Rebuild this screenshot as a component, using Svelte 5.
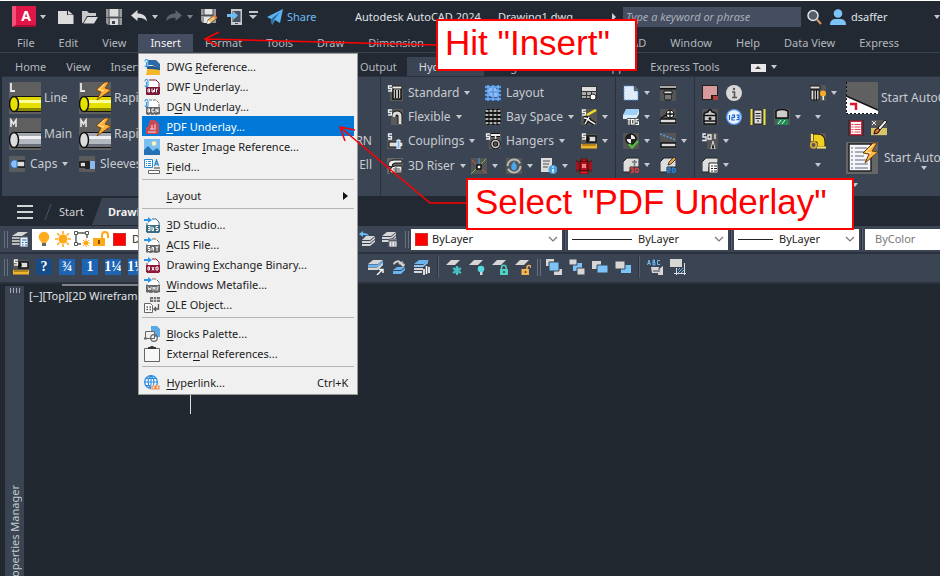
<script>
  const icons = {
    new: '<path d="M0 2h9v4h6.500v9H0z" fill="#dcdcdc"/><path d="M10 1.500l5 4h-5z" fill="#dcdcdc"/>',
    open: '<path d="M0 2h5l2 2h7v3H5L1 14H0z" fill="#c9c9c9"/><path d="M5.500 8H16l-4 6.500H1.500z" fill="#dcdcdc"/>',
    save: '<path d="M0 0h16v16H2l-2-2z" fill="#9a9a9a"/><path d="M3 0h10v7H3z" fill="#dcdcdc"/><path d="M3 0v16M13 0v16M0 8.500h16" stroke="#4a4f57"/><path d="M4 10h8v6H4z" fill="#dcdcdc"/><path d="M6 12h3v3H6z" fill="#39404b"/>',
    undo: '<path d="M0 6.500L6.500 1v3.500c5 0 9 2 9.500 8-2-3-5-4-9.500-3.800V12z" fill="#dcdcdc"/>',
    redo: '<path d="M16 6.500L9.500 1v3.500c-5 0-9 2-9.500 8 2-3 5-4 9.500-3.800V12z" fill="#5b6370"/>',
    saveas: '<path d="M0 0h15v14H2l-2-2z" fill="#9a9a9a"/><path d="M3 0h9v5H3z" fill="#e4e4e4"/><path d="M3 8h7v6H3z" fill="#e4e4e4"/><path d="M0 6.500h14M3 0v6M12 0v6" stroke="#4a4f57"/><path d="M6 15l1-4 6-5 3 3-6 5z" fill="#f4bd62" stroke="#2b313a" stroke-width=".7"/><path d="M6 15l1-4 3 3z" fill="#fff"/><path d="M12 7l3 3 1.500-1.500-3-3z" fill="#e3735d"/>',
    mobile: '<path d="M4 0h11v16H4z" fill="#c9c9c9"/><path d="M5.500 2h8v11h-8z" fill="#4a5260"/><path d="M8 14h3v1H8z" fill="#4a5260"/><path d="M0 5h6V2l5 4.500L6 11V8H0z" fill="#6cbcf5"/>',
    plane: '<path d="M0 8L16 0l-3 14-5-3-3 5-1-6z" fill="#5eb4f2"/><path d="M4 10l9-7-6 8-2 5z" fill="#2c6da0"/>',
    search: '<circle cx="7" cy="6.500" r="5" fill="#555d6b" stroke="#e4e4e4" stroke-width="1.500"/><path d="M11 10.500l4 4.500" stroke="#d49a68" stroke-width="2"/>',
    user: '<circle cx="8" cy="4.500" r="4.300" fill="#7cc3f8"/><path d="M0 16c0-5 3-6 6-6h4c3 0 6 1 6 6z" fill="#7cc3f8"/>',
    stand: '<path d="M3 0h13v16H3z" fill="#5b5b5b"/><path d="M6 4v10h8V4" fill="#ddd" stroke="#111" stroke-width="1.500"/><path d="M5 1h10v3H5z" fill="#eee" stroke="#111"/><path d="M8.500 5v8M11.500 5v8" stroke="#111" stroke-width="1.300"/><path d="M5 1H1.500v2.500h3V6H1" fill="none" stroke="#eee" stroke-width="1.300"/>',
    flex: '<path d="M4 0h12v16H4z" fill="#5b5b5b"/><path d="M7 8V6.500q0-2.500 3-2.500t3 3V15" fill="none" stroke="#111" stroke-width="5"/><path d="M7 8V6.500q0-2.500 3-2.500t3 3V15" fill="none" stroke="#ddd" stroke-width="3"/><path d="M5 1H1.500v2.500h3V6H1" fill="none" stroke="#eee" stroke-width="1.300"/>',
    coupling: '<path d="M0 7h16v9H0z" fill="#5b5b5b"/><path d="M2 9h14v5H2z" fill="#ddd" stroke="#111"/><path d="M10 7h3v9h-3z" fill="#7fb4f0" stroke="#fff"/><path d="M5 1H1.500v2.500h3V6H1" fill="none" stroke="#eee" stroke-width="1.300"/>',
    riser: '<path d="M0 0h16v16H0z" fill="#666"/><path d="M1 8q0-6 6-6h8v3H8q-3 0-3 4zM3 12q1-4 5-4h7v7H3z" fill="#eee" stroke="#111"/><path d="M6 11h7M7 13h7M9 9v5" stroke="#555"/>',
    layout: '<path d="M0 0h16v16H0z" fill="#34558b"/><path d="M0 2h16M0 6h16M0 10h16M0 14h16M3 0v16M8 0v16M13 0v16" stroke="#72b4ff" stroke-width="1.300"/><path d="M4 3h7l2 4-1 5H6l-3-5z" fill="#8cbcf8"/><path d="M8 3v9M4 7h9" stroke="#4a86d8"/>',
    bay: '<path d="M0 0h16v16H0z" fill="#444"/><path d="M0 3h16M0 8h16M0 13h16M3 0v16M8 0v16M13 0v16" stroke="#111" stroke-width="3"/><path d="M2 1v15M6 1v15M10 1v15M14 1v15" stroke="#eee" stroke-width="1.500" stroke-dasharray="2 2"/><path d="M0 2h16M0 6h16M0 10h16M0 14h16" stroke="#aaa" stroke-width=".8"/>',
    hanger: '<path d="M4 0h12v16H4z" fill="#5b5b5b"/><path d="M6 2h9" stroke="#111" stroke-width="4"/><path d="M6 2h9" stroke="#eee" stroke-width="2"/><path d="M10.500 3v4" stroke="#eee" stroke-width="1.500"/><circle cx="10.500" cy="11" r="3.500" fill="none" stroke="#111" stroke-width="3.500"/><circle cx="10.500" cy="11" r="3.500" fill="none" stroke="#ccc" stroke-width="1.500"/><path d="M5 1H1.500v2.500h3V6H1" fill="none" stroke="#eee" stroke-width="1.300"/>',
    sched: '<path d="M0 1h16v13H0z" fill="#333"/><path d="M1 2h14v4H1z" fill="#ddd"/><path d="M1 7h4v3H1zM6 7h4v3H6zM11 7h4v3h-4zM1 11h4v2H1zM6 11h4v2H6z" fill="#aaa"/><circle cx="12" cy="12" r="3" fill="#fff" stroke="#222"/>',
    brace: '<path d="M0 0h16v16H0z" fill="#555"/><path d="M6 6l9-5" stroke="#f0e020" stroke-width="2.500"/><path d="M3 9q4 0 6 3l5 3M8 8l-4 7" stroke="#111" stroke-width="4" fill="none"/><path d="M3 9q4 0 6 3l5 3M8 8l-4 7" stroke="#eee" stroke-width="1.500" fill="none"/><path d="M5 1H1.500v2.500h3V6H1" fill="none" stroke="#eee" stroke-width="1.300"/>',
    ruler: '<path d="M0 1h16v10H0z" fill="#555"/><path d="M6 3h9v6H6z" fill="#ddd" stroke="#111" stroke-width="1.500"/><ellipse cx="7" cy="6" rx="1.800" ry="2.800" fill="#111"/><path d="M0 11h16v4.500H0z" fill="#f0b52a"/><path d="M2 11v2M4 11v2M6 11v2M8 11v2M10 11v2M12 11v2M14 11v2" stroke="#735210"/><path d="M5 1H1.500v2.500h3V6H1" fill="none" stroke="#eee" stroke-width="1.300"/>',
    node: '<path d="M0 0h16v16H0z" fill="#555"/><path d="M8 0v6" stroke="#3fa4ff"/><path d="M0 16l6-6M10 6l5-5" stroke="#66bb44"/><path d="M1 2l5 5M10 10l5 5" stroke="#d05050"/><path d="M6 7h4v4H6z" fill="#fff" stroke="#111" stroke-width="1.500"/>',
    cycle: '<path d="M0 0h16v16H0z" fill="#555"/><circle cx="8" cy="8" r="6.500" fill="none" stroke="#bbb" stroke-width="2" stroke-dasharray="17 3"/><path d="M8 3l3 5-1 4H6L5 8z" fill="#45a8ee"/>',
    docinfo: '<path d="M0 0h11v14H0z" fill="#ddd"/><path d="M2 3h7M2 6h6M2 9h5" stroke="#555"/><circle cx="12" cy="11.500" r="4.500" fill="#4c9fe0"/><path d="M12 11v3.500M12 8.500v1.300" stroke="#fff" stroke-width="1.500"/>',
    hydrant: '<path d="M0 0h16v16H0z" fill="#444"/><path d="M1 5h14v6H1z" fill="#d02030"/><path d="M4 3h8v10H4z" fill="#b31320" stroke="#300"/><path d="M5 1h6v2H5zM4 13h8v3H4zM0 3h2v10H0zM14 3h2v10h-2z" fill="#d62030" stroke="#400" stroke-width=".7"/><path d="M6 6h4v4H6z" fill="#f08080"/>',
    page: '<path d="M1 1h10v5h4v9H1z" fill="#e2ebf8" stroke="#5b9fe8" stroke-dasharray="1.500 1"/><path d="M12 1v4h4z" fill="#666"/>',
    head: '<path d="M0 0h16v16H0z" fill="#555"/><path d="M0 2.500h16" stroke="#111" stroke-width="4"/><path d="M0 2h16" stroke="#ddd" stroke-width="1.500"/><path d="M4 6h8v3H4zM5 9h6v6H5z" fill="#ddd" stroke="#111"/><path d="M7 9v6M9 9v6" stroke="#111"/>',
    tos: '<path d="M3 0h13l-3 6H0z" fill="#9dd0fa"/><path d="M0 6h13l3-6v5l-3 5H0z" fill="#d9ecfb"/><path d="M4 9h12v7H4z" fill="#555"/><path d="M4.500 10.500h3M6 10.500V16M8.500 10.500h2.500V15H8.500zM15.500 10.500H13V13h2.500v2.500H12.500" fill="none" stroke="#fff" stroke-width="1.100"/>',
    target: '<path d="M0 0h16v16H0z" fill="#555"/><path d="M0 10h16v4H0z" fill="#ddd" stroke="#111" stroke-width="1.500"/><circle cx="10" cy="5" r="4" fill="#eee" stroke="#111"/><path d="M10 1v8M6 5h8M1 9l5-3" stroke="#111" stroke-width="1.300" fill="none"/>',
    check: '<path d="M0 0h16v16H0z" fill="#555"/><circle cx="8" cy="6" r="5" fill="#eee" stroke="#111" stroke-width="1.500"/><path d="M8 1v5H3a5 5 0 015-5M8 11V6h5a5 5 0 01-5 5" fill="#222"/><path d="M6 11l3 3.500L15 8" fill="none" stroke="#55b83c" stroke-width="2.500"/>',
    slope: '<path d="M0 0h16v16H0z" fill="#555"/><path d="M0 1l16 6" stroke="#4a9ff0" stroke-dasharray="2 1.500" stroke-width="1.500"/><path d="M1 10h15v4H1z" fill="#ddd" stroke="#111" stroke-width="1.500"/>',
    d3: '<path d="M0 15V5l4-4h12v9H7v5z" fill="#ddd" stroke="#222"/><path d="M9 5h5M11.500 3v6" stroke="#777" stroke-width="1.500"/><path d="M7 11h3v4.500H7M8 13h2M12.500 11v4.500M12.500 11q3 0 3 2.300q0 2.200-3 2.200" stroke="#d84040" stroke-width="1.400" fill="none"/>',
    d2: '<path d="M0 15V5l4-4h12v9H7v5z" fill="#ddd" stroke="#222"/><path d="M8 8l1-3 5-5 2 2-5 5z" fill="#eba444" stroke="#222" stroke-width=".8"/><path d="M7 11h3v2.200H7.500v2.300h3M12.500 11v4.500M12.500 11q3 0 3 2.300q0 2.200-3 2.200" stroke="#2d7fd0" stroke-width="1.400" fill="none"/>',
    area: '<path d="M0 0h16v11h-5v4H0z" fill="#222"/><path d="M1 1h14v9H9v4H1z" fill="#d99a9e"/><path d="M11 11h5v4h-5z" fill="#b04040"/>',
    info: '<circle cx="8" cy="8" r="8" fill="#d8d8d8"/><path d="M6 7h2.500v5M6 12.500h5" stroke="#555" stroke-width="1.600" fill="none"/><circle cx="8" cy="4" r="1.200" fill="#555"/>',
    tank: '<path d="M0 0h16v16H0z" fill="#555"/><path d="M2 5q1-2 4-2l1-2h2l1 2q3 0 4 2v10H2z" fill="#ccc" stroke="#111" stroke-width="1.500"/><path d="M2 6.500h12M2 12h12" stroke="#111" stroke-width="1.500"/><circle cx="8" cy="9.500" r="1.500" fill="#111"/>',
    n123: '<circle cx="8" cy="8" r="8" fill="#5b9dfa"/><circle cx="8" cy="8" r="6.700" fill="#eef5ff"/><path d="M3.500 6v5M6 6.200h2.500v2.200H6V11h3M10.500 6.200H13v4.500h-2.500M11 8.400h2" stroke="#1b61d6" stroke-width="1.200" fill="none"/>',
    list: '<path d="M0 0h16v16H0z" fill="#444"/><path d="M1.500 0v16M14.500 0v16" stroke="#eee24a" stroke-width="2"/><path d="M4 1h8v14H4z" fill="#ddd" stroke="#222"/><path d="M5.500 4.500h5M5.500 7h5M5.500 9.500h5M7 12h2" stroke="#222"/>',
    valve: '<path d="M0 0h16v16H0z" fill="#555"/><path d="M2 2q6-3 12 0v7H2z" fill="#ccc" stroke="#111" stroke-width="1.500"/><path d="M3 10h11v6H3z" fill="#1f8a55"/><path d="M4 15l3-4M8 15l3-4" stroke="#d6fbe4"/>',
    s01: '<path d="M5 0h11v16H5z" fill="#555"/><path d="M4 1H1v3h3v3.500H0M6 2h3v4H6zM13 1v5" fill="none" stroke="#eee" stroke-width="1.300"/><path d="M11 8l2 8H9z" fill="#111" stroke="#ddd"/>',
    table: '<path d="M0 15V5l4-4h12v9H7v5z" fill="#ddd" stroke="#222"/><path d="M7 6h9v10H7z" fill="#fff" stroke="#222"/><path d="M9 9h2M12 9h3M9 11.500h2M12 11.500h3M9 14h2M12 14h3" stroke="#222"/>',
    fast: '<path d="M0 0h16v16H0z" fill="#555"/><path d="M0 1h10v3H0zM1 5h8v10H1z" fill="#ddd" stroke="#111"/><path d="M4 5v10M6.500 5v10" stroke="#111" stroke-width="1.300"/><circle cx="13" cy="8.500" r="3" fill="#f7a928"/><path d="M12.500 11h1.500v4h-1.500z" fill="#eee"/>',
    elbow: '<path d="M0 0h16v16H0z" fill="#555"/><path d="M3 1h4q8 0 8 8v5H7V9H3z" fill="#efcf22" stroke="#111"/><path d="M2 1v7M7 14.500h9" stroke="#f8e468" stroke-width="2"/><circle cx="3.500" cy="12" r="2.800" fill="none" stroke="#d8a93a" stroke-width="1.800"/>',
    redlist: '<path d="M1 0h14v16H1z" fill="#c62b45" stroke="#222"/><path d="M3 2h10v12H3z" fill="#fff"/><path d="M3.500 4.500h9M3.500 7h9M3.500 9.500h9M3.500 12h9" stroke="#e03c50" stroke-dasharray="2 1 6 0"/>',
    brush: '<path d="M0 0h16v16H0z" fill="#555"/><path d="M0 8h16v7H0z" fill="#d8c56a"/><path d="M3 14q0-5 4-6l2 2q-1 4-6 4z" fill="#e06a28" stroke="#111"/><path d="M7 8l7-8 2 2-7 8z" fill="#eee" stroke="#111"/><path d="M1 1l4 4M5 1L1 5" stroke="#eee"/>',
    layers: '<path d="M6 1h10l-6 4H0z" fill="#d6d6d6"/><path d="M0 6h8v2H0zM0 9h8v2H0zM0 12h8v2H0z" fill="#b8b8b8"/><path d="M8 6h8v10H8z" fill="#eaf2fa" stroke="#59616e"/><path d="M10 9h4.500M10 11.500h1.500M10 14h1.500M13 11.500h2M13 14h2" stroke="#1d6ab5"/>',
    bulb: '<circle cx="8" cy="6" r="5.300" fill="#ffad1f"/><path d="M5.500 10h5v2h-5z" fill="#ffad1f"/><path d="M6 12h4v3H6z" fill="#666"/>',
    sun: '<circle cx="8" cy="8" r="4.500" fill="#ffa81a"/><path d="M8 0v3M8 13v3M0 8h3M13 8h3M2.300 2.300l2.200 2.200M11.500 11.500l2.200 2.200M2.300 13.700l2.200-2.200M11.500 4.500l2.200-2.200" stroke="#ffa81a" stroke-width="1.600"/>',
    frame: '<path d="M3 2h9M2 3v9M13 3v4M3 13h4" stroke="#555" stroke-width="1.400"/><path d="M.5.500h3v3h-3zM11.500.500h3v3h-3zM.5 11.500h3v3h-3z" fill="#fff" stroke="#555"/><circle cx="12" cy="12" r="2.300" fill="#ffa81a"/><path d="M12 8v8M8 12h8M9 9l6 6M15 9l-6 6" stroke="#ffa81a" stroke-width=".9"/>',
    unlock: '<path d="M9 8V4a3 3 0 016 0v3" fill="none" stroke="#ffa81a" stroke-width="2"/><path d="M0 7h12v8H0z" fill="#ffa81a"/><path d="M5 9h2v4H5z" fill="#7a4c00"/>',
    lback: '<path d="M7 5h9l-5 4H3zM3 10h8l5-4v2l-5 4H3zM3 13h8l5-4v2l-5 4H3z" fill="#d6d6d6"/><path d="M0 3l4-3v2q5 0 6 3-3-1-6-1v2z" fill="#6cbcf5"/>',
    lset: '<path d="M6 1h9l-5 4H1zM1 6h9l5-4v2l-5 4H1zM1 9h9l5-4v2l-5 4H1z" fill="#d6d6d6"/><path d="M8 8h8v8H8z" fill="#eee" stroke="#59616e"/><path d="M8 9.500h8" stroke="#59616e" stroke-width="2"/><path d="M10 12h1.500M13 12h1.500M10 14h1.500M13 14h1.500" stroke="#59616e"/>',
    lmatch: '<path d="M5 1h10l-5 4H0zM0 8.500h9l6-5v2.500l-5 5H0z" fill="#d6d6d6"/><path d="M0 5.500h9.500l5.500-4v2L9.500 8H0z" fill="#69b5f2"/><path d="M9 16l5-5M11 10.500h4V14" fill="none" stroke="#fff" stroke-width="1.400"/>',
    liso: '<path d="M2 4q5-5 8-1l2-1-1 4-4-1 1.500-1Q6 2 3 6z" fill="#d6d6d6"/><circle cx="12" cy="6" r="1.800" fill="#d6d6d6"/><path d="M6 8h8l-4 3H2zM2 12h8l4-3v2l-4 4H2z" fill="#69b5f2"/>',
    lwalk: '<path d="M5 1h10l-5 4H0z" fill="#69b5f2"/><path d="M0 6h9l5-4v2L9 8H0z" fill="#8cc7f5"/><path d="M0 9h9v2H0zM0 12h8v2H0z" fill="#d6d6d6"/><path d="M10 10v6M12.500 7v8M15 8v6" stroke="#fff" stroke-width="1.600"/>',
    lfreeze: '<path d="M5 1h9L9 6H0z" fill="#d6d6d6"/><path d="M11 7v9M7 9l8 5M15 9l-8 5" stroke="#45c4c8" stroke-width="2"/><circle cx="11" cy="11.500" r="3" fill="none" stroke="#45c4c8"/>',
    loff: '<path d="M5 1h9L9 6H0z" fill="#d6d6d6"/><circle cx="12" cy="10" r="3.300" fill="#55d9e0"/><path d="M11 13h2.500v3H11z" fill="#d6d6d6"/>',
    llock: '<path d="M5 1h9L9 6H0z" fill="#d6d6d6"/><path d="M9.500 10V8.500a2.300 2.300 0 014.600 0V10" fill="none" stroke="#55d0c0" stroke-width="1.500"/><path d="M8 10h8v6H8z" fill="#55d0c0"/><path d="M12 12v2" stroke="#14524c" stroke-width="1.500"/>',
    lunlock: '<path d="M5 1h9L9 6H0z" fill="#d6d6d6"/><path d="M12 10V8.500a2 2 0 014 0V9" fill="none" stroke="#f5b556" stroke-width="1.500"/><path d="M6.500 10H14v6H6.500z" fill="#f5b556"/><path d="M10.500 12v2" stroke="#6b4205" stroke-width="1.500"/>',
    ofront: '<path d="M0 0h8v7H0zM8 10h8v6H8z" fill="#d6d6d6"/><path d="M3 3h10v9H3z" fill="#7cc3f8" stroke="#3b4453"/>',
    oback: '<path d="M4 4h9v8H4z" fill="#7cc3f8"/><path d="M0 0h8v6H0zM8 9h8v7H8z" fill="#d6d6d6" stroke="#3b4453"/>',
    oabove: '<path d="M0 2h9v8H0z" fill="#d6d6d6"/><path d="M5 6h11v8H5z" fill="#7cc3f8" stroke="#3b4453"/>',
    obelow: '<path d="M6 6h10v8H6z" fill="#7cc3f8"/><path d="M0 2h10v8H0z" fill="#d6d6d6" stroke="#3b4453"/>',
    abc: '<path d="M0.500 6L2 1l1.500 5M1 4.500h2M6 1v5h2V3.500H6M6 1h1.500v2.500M13 1.500h-2.500v4H13" fill="none" stroke="#6cbcf5"/><path d="M4 8h8v2l4-3v9h-5v-2H5z" fill="#d6d6d6"/><path d="M12 9v4M6 12h5" stroke="#3b4453"/>',
    hatch: '<path d="M0 0h12v8H0z" fill="#d6d6d6"/><path d="M4 14.500h12M14.500 4v12M6.500 9v7" stroke="#ddd" fill="none"/><path d="M7 9h7v5H7z" fill="#3b4453"/><path d="M8 14l5-5M8 11l2-2M11 14l3-3" stroke="#6cbcf5"/>',
    dwg: '<path d="M4 1h8l4 4v5L8 6H4z" fill="#2c6aa8"/><path d="M4 7l12 2v7H2z" fill="#f4b62b"/><path d="M3 7l6 0 7 2v2L8 10H3z" fill="#24588e"/><path d="M1 2.500q0-2 1.500-2t1.500 2v4q0 1.500-1.500 1.500T1 6.500M2.500 3v5" fill="none" stroke="#3a9ae0" stroke-width="1.100"/>',
    dwf: '<path d="M5 1h7l3 3v11.500H2.500V8" fill="#fff" stroke="#7b1734"/><path d="M2 8h14v7H2z" fill="#7b1734"/><path d="M4 10v3h1.500v-3zM8 9.500V13h1.500V11M10.500 13V9.500M14 10h-1.500v3.500" fill="none" stroke="#fff"/><path d="M1 2.500q0-2 1.500-2t1.500 2v4q0 1.500-1.500 1.500T1 6.500M2.500 3v5" fill="none" stroke="#3a9ae0" stroke-width="1.100"/>',
    dgn: '<path d="M5 1h7l3 3v11.500H2.500V8" fill="#fff" stroke="#777" stroke-dasharray="3 1"/><path d="M2 8h14v7H2z" fill="#666"/><path d="M4 10v3h1.500v-3zM10 10H8v3h2v-1M12 13.500V10l2 3V9.500" fill="none" stroke="#fff"/><path d="M1 2.500q0-2 1.500-2t1.500 2v4q0 1.500-1.500 1.500T1 6.500M2.500 3v5" fill="none" stroke="#3a9ae0" stroke-width="1.100"/>',
    pdf: '<path d="M6 1h5l4 4v9H4V7z" fill="#c94a55"/><path d="M2 8h12v7H2z" fill="#c94a55"/><path d="M4 13h8M6 10h4M8 6v4M11 5v6" stroke="#f3dde0"/>',
    raster: '<path d="M0 0h16v16H0z" fill="#7cc0f2"/><path d="M0 11l4-4 5 5 4-3 3 3v4H0z" fill="#2472b4"/><circle cx="10" cy="4.500" r="2.300" fill="#fff2b8"/>',
    field: '<path d="M.5.500h8v8h-8z" fill="#fff" stroke="#2d8ad0"/><path d="M2 2.500h1M4 2.500h3M2 4.500h1M4 4.500h3M2 6.500h1M4 6.500h3" stroke="#2d8ad0"/><path d="M10.500 7l2-6 2 6M11 5h3.500" fill="none" stroke="#2d8ad0" stroke-width="1.300"/><path d="M4.500 11.500h11v3h-11z" fill="#fff" stroke="#666"/><path d="M10 9h6" stroke="#666" stroke-width="1.300"/>',
    imp3d: '<path d="M8 2h4l3 3v10.500H3V6" fill="#fff" stroke="#3d6c85"/><path d="M2 8h14v7H2z" fill="#3d6c85"/><path d="M4 9.500h2v4H4M4 11.500h2M8 9.500v4h1.500v-3M14 9.500h-2v2h2v2h-2" fill="none" stroke="#fff"/><path d="M0 2h4V0l4 3-4 3V4H0z" fill="#2d94e8"/>',
    impg: '<path d="M8 2h4l3 3v10.500H3V6" fill="#fff" stroke="#777" stroke-dasharray="4 1"/><path d="M2 8h14v7H2z" fill="#666"/><path d="M6 9.500H4v2h2v2H4M8 13.500v-3h1.500v3M11.500 10h3M13 10v4" fill="none" stroke="#fff"/><path d="M0 2h4V0l4 3-4 3V4H0z" fill="#2d94e8"/>',
    wmf: '<path d="M8 2h4l3 3v10.500H3V6" fill="#fff" stroke="#777" stroke-dasharray="4 1"/><path d="M2 8h14v7H2z" fill="#666"/><path d="M4 9.500l.7 3.500 1-2 1 2 .6-3.500M9 13.500V10l1 2 1-2v3.500M13 14v-4h2M13 12h1.500" fill="none" stroke="#fff" stroke-width=".8"/><path d="M0 2h4V0l4 3-4 3V4H0z" fill="#2d94e8"/>',
    impr: '<path d="M8 2h4l3 3v10.500H3V6" fill="#fff" stroke="#8e1838"/><path d="M2 8h14v7H2z" fill="#8e1838"/><path d="M4 10v3h1.500v-3zM8 10l2 3.500M10 10l-2 3.500M12 10h2v3h-2z" fill="none" stroke="#fff"/><path d="M0 2h4V0l4 3-4 3V4H0z" fill="#2d94e8"/>',
    ole: '<path d="M6 0h10v5H6z" fill="#777"/><path d="M7 2.500h9M9.500 0v5M12.500 0v5" stroke="#eee" stroke-width=".7"/><path d="M.5 6.500h6l2 2v7h-8z" fill="#fff" stroke="#666"/><path d="M2.500 10h1.500M2.500 12.500h1.500M5.500 10H7M5.500 12.500H7" stroke="#555" stroke-width="1.300"/><path d="M14.500 7v5H10M12 10l-2 2 2 2" fill="none" stroke="#555" stroke-width="1.300"/>',
    blocks: '<path d="M7 0h6l3 3v8H7z" fill="#5aa8e4"/><path d="M1.500 5.500h9v7h-9z" fill="#eee" stroke="#666"/><path d="M0 12.500h3" stroke="#666" stroke-width="2"/><circle cx="10" cy="12" r="3.300" fill="none" stroke="#666" stroke-width="1.200"/>',
    xref: '<path d="M.5 2.500h15v13H.5z" fill="#f8f8f8" stroke="#666"/><path d="M4 1h2l1-1h2l1 1h2v2H4z" fill="#333"/>',
    globe: '<circle cx="7" cy="7" r="6.300" fill="#fff" stroke="#2a8be0" stroke-width="1.300"/><path d="M0 7h14M1.500 3.500h11M1.500 10.500h11M7 0v14M7 0q-6 7 0 14M7 0q6 7 0 14" fill="none" stroke="#2a8be0" stroke-width="1.100"/><path d="M7 10h9v5H7z" fill="#f0f0f0"/><path d="M8 11h3v3H8zM12 11h3v3h-3z" fill="none" stroke="#ee8340" stroke-width="1.200"/>',
    caps: '<path d="M0 0h16v16H0z" fill="#5b5b5b"/><path d="M6 5h10v6H6z" fill="#ddd" stroke="#111" stroke-width="1.500"/><path d="M4 4h4v8H4q-5-4 0-8z" fill="#8cc0ff" stroke="#2e6cb8"/>',
    sleeve: '<path d="M0 0h16v16H0z" fill="#5b5b5b"/><path d="M1 6h9v5H1z" fill="#ddd" stroke="#111" stroke-width="1.500"/><path d="M9 5h7v8H9z" fill="#8db8ef"/><path d="M6 5h5v8H6z" fill="#222"/>'
  };

  const big = {
    pipeL: '<path d="M0 0h32v32H0z" fill="#5f5f5f"/><path d="M2 1v8h4" fill="none" stroke="#e8e8e8" stroke-width="1.800"/><path d="M5 14h27v16H5z" fill="#111"/><path d="M7 15h25v4H7z" fill="#dcd800"/><path d="M7 18h25v4H7z" fill="#ffff9a"/><path d="M7 21h25v5H7z" fill="#e6e000"/><path d="M7 26h25v3H7z" fill="#8d8a00"/><ellipse cx="5" cy="22" rx="4.500" ry="7.500" fill="#e8e200" stroke="#111" stroke-width="1.500"/>',
    pipeM: '<path d="M0 0h32v32H0z" fill="#5f5f5f"/><path d="M2 9V2l2.500 4L7 2v7" fill="none" stroke="#e8e8e8" stroke-width="1.600"/><path d="M5 14h27v16H5z" fill="#111"/><path d="M7 15h25v4H7z" fill="#a3a7b0"/><path d="M7 18h25v4H7z" fill="#f0f0f4"/><path d="M7 21h25v5H7z" fill="#b4b8c0"/><path d="M7 26h25v3H7z" fill="#6d7078"/><ellipse cx="5" cy="22" rx="4.500" ry="7.500" fill="#ddd" stroke="#111" stroke-width="1.500"/>',
    bolt: '<path d="M26 0L17 8l5 2-4 8 14-10-6-2 4-6z" fill="#ffb03a" stroke="#6d3d00" stroke-width=".8"/><path d="M25 2l-5 5.500 5 1.500" fill="none" stroke="#fff0b0"/>',
    cad: '<path d="M0 0h32v32H0z" fill="#606060"/><path d="M0 14l32 14v4H0z" fill="#fff"/><path d="M0 14l32 14" stroke="#111" stroke-width="1.500"/><path d="M.5 0v32M0 31.500h32" stroke="#111" stroke-dasharray="2 2"/><path d="M4 22h6v6" fill="none" stroke="#e0182c" stroke-width="2.500"/>',
    lisp: '<path d="M0 0h32v32H0z" fill="#666"/><path d="M3 2h22v27H3z" fill="#f3f6fa" stroke="#222" stroke-width="1.500"/><path d="M5 6h2M5 10h2M5 14h2M5 18h2M5 22h2M5 26h2M9 6h12M9 10h10M9 14h9M9 18h13M9 22h13M9 26h13" stroke="#667" stroke-width="1.200"/><path d="M27 1L17 11l6 1-4 9 13-11-6-1 5-8z" fill="#ffb84a" stroke="#6d3d00"/><path d="M27 3l-7 7 5 1" fill="none" stroke="#fff0b0"/>'
  };

  const menuGroups = [
    [
      ['dwg', 'DWG ', 'R', 'eference...'],
      ['dwf', 'DWF ', 'U', 'nderlay...'],
      ['dgn', 'D', 'G', 'N Underlay...'],
      ['pdf', '', 'P', 'DF Underlay...'],
      ['raster', 'Raster ', 'I', 'mage Reference...'],
      ['field', '', 'F', 'ield...']
    ],
    [['', '', 'L', 'ayout', 'sub']],
    [
      ['imp3d', '', '3', 'D Studio...'],
      ['impg', '', 'A', 'CIS File...'],
      ['impr', 'Drawing ', 'E', 'xchange Binary...'],
      ['wmf', '', 'W', 'indows Metafile...'],
      ['ole', '', 'O', 'LE Object...']
    ],
    [
      ['blocks', '', 'B', 'locks Palette...'],
      ['xref', 'Exter', 'n', 'al References...']
    ],
    [['globe', '', 'H', 'yperlink...', 'Ctrl+K']]
  ];

  const menus = ['File', 'Edit', 'View', 'Insert', 'Format', 'Tools', 'Draw', 'Dimension', 'Modify', 'Parametrics', 'HydraCAD', 'Window', 'Help', 'Data View', 'Express'];
  const tabs = ['Home', 'View', 'Insert', 'Annotate', 'Parametric', 'Layout', 'Output', 'HydraCAD', 'Plug-ins', 'Featured Apps', 'Express Tools'];
  const sizes = ['?', '¾', '1', '1¼', '1½', '2'];
</script>

{#snippet icon(name)}
  <svg class="ic" viewBox="0 0 16 16" aria-hidden="true">{@html icons[name]}</svg>
{/snippet}

{#snippet large(name, bolt)}
  <svg class="lg" viewBox="0 0 32 32" aria-hidden="true">{@html big[name] + (bolt ? big.bolt : '')}</svg>
{/snippet}

{#snippet tool(name, label, arrow)}
  <button class="tool" aria-label={label || name}>
    {#if name}{@render icon(name)}{/if}
    {#if label}<span>{label}</span>{/if}
    {#if arrow}<i class="caret"></i>{/if}
  </button>
{/snippet}

{#snippet chevron()}
  <svg class="chev" viewBox="0 0 10 6" aria-hidden="true"><path d="M1 1l4 4 4-4" fill="none" stroke="#777" stroke-width="1.200" /></svg>
{/snippet}

<div class="app">
  <header class="title">
    <button class="logo" aria-label="Application menu">A</button>
    <i class="caret"></i>
    <div class="quick">
      <button aria-label="New">{@render icon('new')}</button>
      <button aria-label="Open">{@render icon('open')}</button>
      <button aria-label="Save">{@render icon('save')}</button>
    </div>
    <button class="step" aria-label="Undo">{@render icon('undo')}<i class="caret"></i></button>
    <button class="step" aria-label="Redo">{@render icon('redo')}<i class="caret dim"></i></button>
    <button class="after" aria-label="Save as">{@render icon('saveas')}</button>
    <button class="after" aria-label="Open from mobile">{@render icon('mobile')}</button>
    <i class="caret lined"></i>
    <button class="share">{@render icon('plane')}<span>Share</span></button>
    <div class="doc"><span>Autodesk AutoCAD 2024</span><span>Drawing1.dwg</span></div>
    <i class="play"></i>
    <input class="find" type="text" placeholder="Type a keyword or phrase" aria-label="Search" />
    <button aria-label="Search">{@render icon('search')}</button>
    <button class="user">{@render icon('user')}<span>dsaffer</span></button>
    <i class="caret"></i>
  </header>

  <nav class="menubar">
    {#each menus as m}
      <div class="entry" class:active={m === 'Insert'}>
        <button>{m}</button>
        {#if m === 'Insert'}
          <div class="menu" role="menu">
            {#each menuGroups as group, g}
              {#if g}<hr />{/if}
              {#each group as [ic, pre, key, post, extra]}
                <button role="menuitem" class:hot={ic === 'pdf'}>
                  <span class="gutter">{#if ic}{@render icon(ic)}{/if}</span>
                  <span class="name">{pre}<u>{key}</u>{post}</span>
                  {#if extra === 'sub'}<i class="sub"></i>{:else if extra}<span>{extra}</span>{/if}
                </button>
              {/each}
            {/each}
          </div>
        {/if}
      </div>
    {/each}
  </nav>

  <nav class="tabs">
    {#each tabs as t}
      <button class:active={t === 'HydraCAD'}>{t}</button>
    {/each}
    <button class="collapse" aria-label="Minimize ribbon"><i class="up"></i></button>
    <i class="caret"></i>
  </nav>

  <section class="ribbon">
    <div class="panel pipes">
      <div class="grid">
        <button class="tool">{@render large('pipeL')}<span>Line</span></button>
        <button class="tool">{@render large('pipeL', true)}<span>Rapid Line</span></button>
        <button class="tool">{@render large('pipeM')}<span>Main</span></button>
        <button class="tool">{@render large('pipeM', true)}<span>Rapid Main</span></button>
        {@render tool('caps', 'Caps', true)}
        {@render tool('sleeve', 'Sleeves', false)}
      </div>
      <div class="ends"><span>RN</span><span>Ell</span></div>
    </div>

    <div class="panel fittings">
      <div class="row">{@render tool('stand', 'Standard', true)}{@render tool('layout', 'Layout')}{@render tool('sched')}</div>
      <div class="row">{@render tool('flex', 'Flexible', true)}{@render tool('bay', 'Bay Space', true)}{@render tool('brace', '', true)}</div>
      <div class="row">{@render tool('coupling', 'Couplings', true)}{@render tool('hanger', 'Hangers', true)}{@render tool('ruler', '', true)}</div>
      <div class="row last">{@render tool('riser', '3D Riser', true)}{@render tool('node', '', true)}{@render tool('cycle', '', true)}{@render tool('docinfo', '', true)}{@render tool('hydrant')}</div>
    </div>

    <div class="panel pair">
      <div class="row">{@render tool('page', '', true)}{@render tool('head')}</div>
      <div class="row">{@render tool('tos', '', true)}{@render tool('target')}</div>
      <div class="row">{@render tool('check', '', true)}{@render tool('slope', '', true)}</div>
      <div class="row">{@render tool('d3', '', true)}{@render tool('d2')}</div>
    </div>

    <div class="panel tools">
      <div class="set">
        <div class="row">{@render tool('area')}{@render tool('info')}</div>
        <div class="row">{@render tool('tank')}{@render tool('n123')}{@render tool('list')}{@render tool('valve', '', true)}</div>
        <div class="row">{@render tool('s01', '', true)}</div>
        <div class="row">{@render tool('table', '', true)}</div>
      </div>
      <div class="set narrow">
        <div class="row">{@render tool('fast', '', true)}</div>
        <div class="row mid"><i class="caret"></i></div>
        <div class="row">{@render tool('elbow')}</div>
        <div class="row mid"><i class="caret"></i></div>
      </div>
      <div class="start">
        <button class="tool">{@render large('cad')}<span>Start AutoCAD</span></button>
        <div class="minis">{@render tool('redlist')}{@render tool('brush')}</div>
        <button class="tool wide">{@render large('lisp')}<span class="stack"><span>Start AutoLISP</span><i class="caret"></i></span></button>
        <i class="caret more"></i>
      </div>
    </div>
  </section>

  <nav class="files">
    <button class="burger" aria-label="Drawings menu"><i></i><i></i><i></i></button>
    <svg class="slash" viewBox="0 0 8 16" aria-hidden="true"><path d="M1 16L7 0" stroke="#4b5464" /></svg>
    <button class="plain">Start</button>
    <button class="current">Drawing1*</button>
  </nav>

  <section class="bar">
    <i class="grip"></i>
    <button aria-label="Layer properties">{@render icon('layers')}</button>
    <div class="combo layer">
      {@render icon('bulb')}{@render icon('sun')}{@render icon('frame')}{@render icon('unlock')}
      <i class="swatch"></i>
      <select aria-label="Layer"><option>Defpoints</option></select>
      {@render chevron()}
    </div>
    <div class="duo">
      <button aria-label="Layer previous">{@render icon('lback')}</button>
      <button aria-label="Layer states">{@render icon('lset')}</button>
    </div>
    <i class="grip"></i>
    <div class="combo colour"><i class="swatch"></i><select aria-label="Colour"><option>ByLayer</option></select>{@render chevron()}</div>
    <i class="rule"></i>
    <div class="combo ltype"><i class="stroke"></i><select aria-label="Linetype"><option>ByLayer</option></select>{@render chevron()}</div>
    <i class="rule"></i>
    <div class="combo weight"><i class="stroke short"></i><select aria-label="Lineweight"><option>ByLayer</option></select>{@render chevron()}</div>
    <i class="rule"></i>
    <div class="combo plot"><select aria-label="Plot style" disabled><option>ByColor</option></select></div>
  </section>

  <section class="bar second">
    <div class="strip sizes">
      <i class="grip"></i>
      <button aria-label="Pipe size">{@render icon('ruler')}</button>
      {#each sizes as s, n}<button class="size" class:query={n === 0}>{s}</button>{/each}
    </div>
    <div class="strip">
      <button aria-label="Layer match">{@render icon('lmatch')}</button>
      <button aria-label="Layer isolate">{@render icon('liso')}</button>
      <button aria-label="Layer walk">{@render icon('lwalk')}</button>
      <i class="rule"></i>
      <button aria-label="Freeze layer">{@render icon('lfreeze')}</button>
      <button aria-label="Layer off">{@render icon('loff')}</button>
      <button aria-label="Lock layer">{@render icon('llock')}</button>
      <button aria-label="Unlock layer">{@render icon('lunlock')}</button>
    </div>
    <i class="grip"></i>
    <div class="strip">
      <button aria-label="Bring to front">{@render icon('ofront')}</button>
      <button aria-label="Send to back">{@render icon('oback')}</button>
      <button aria-label="Bring above">{@render icon('oabove')}</button>
      <button aria-label="Send under">{@render icon('obelow')}</button>
      <i class="rule"></i>
      <button aria-label="Text to front">{@render icon('abc')}</button>
      <button aria-label="Hatch to back">{@render icon('hatch')}</button>
    </div>
  </section>

  <main>
    <aside><i class="dots"></i><span>Properties Manager</span></aside>
    <div class="canvas">
      <div class="edge"></div>
      <p>[−][Top][2D Wireframe]</p>
      <i class="cross"></i>
    </div>
  </main>

  <svg class="arrows" width="480" height="220" aria-hidden="true">
    <g fill="none" stroke="#f00" stroke-width="1.500">
      <path d="M437 45L205 39M219 32L205 39L218 46" />
      <path d="M467 203H430L340 127M355 130L340 127L345 141" />
    </g>
  </svg>
  <div class="note one">Hit "Insert"</div>
  <div class="note two">Select "PDF Underlay"</div>
</div>

<style>
  :global(body) { background: #212830; overflow: hidden; }
  .app {
    position: relative;
    display: flex;
    flex-direction: column;
    height: 100vh;
    overflow: hidden;
    box-sizing: border-box;
    border-top: 1px solid #fff;
    background: #222933;
    color: #c8cbd0;
    font: 11px/16px "Noto Sans", "Open Sans", sans-serif;
    white-space: nowrap;
  }
  button, select, input { font: inherit; color: inherit; border: 0; padding: 0; margin: 0; background: none; }
  button { display: flex; align-items: center; flex: none; white-space: nowrap; }
  .ic { width: 16px; height: 16px; flex: none; display: block; }
  .lg { width: 32px; height: 32px; flex: none; display: block; }
  .caret { flex: none; width: 0; height: 0; border: 3px solid transparent; border-top: 4px solid #c4c7cc; border-bottom: 0; }
  .caret.dim { border-top-color: #7b828d; }

  .title { display: flex; align-items: center; flex: none; height: 33px; padding: 0 0 2px 12px; box-sizing: border-box; }
  .logo { width: 24px; height: 21px; justify-content: center; box-sizing: border-box; border-left: 4px solid #f0507a; border-bottom: 2px solid #a80e36; background: #e01648; color: #fff; font-weight: 700; font-size: 14px; margin-right: 4px; }
  .quick { display: flex; gap: 8px; margin: 0 9px 0 12px; }
  .step { gap: 5px; margin-right: 8px; }
  .after { margin-right: 10px; }
  .lined { position: relative; margin: 0 10px 0 -4px; border-width: 4px 4px 0; }
  .lined::before { content: ""; position: absolute; left: -4px; top: -8px; width: 9px; height: 2px; background: #c4c7cc; }
  .share { gap: 4px; color: #6cbcf5; width: 88px; }
  .doc { display: flex; color: #e0e2e5; flex: 0 0 256px; }
  .doc span:first-child { width: 143px; }
  .play { flex: none; width: 0; height: 0; margin: 0 7px 0 1px; border: 4px solid transparent; border-left-color: #d0d0d0; border-right: 0; }
  .find { flex: 0 1 178px; min-width: 60px; height: 20px; box-sizing: border-box; padding: 0 3px; margin-right: 5px; background: #454d60; color: #a9aeb8; font-style: italic; }
  .find::placeholder { color: #a9aeb8; opacity: 1; }
  .user { gap: 5px; margin: 0 auto 0 8px; color: #e0e2e5; }

  .menubar { display: flex; flex: none; height: 19px; padding: 0 5px; box-sizing: border-box; border-bottom: 1px solid #3b4453; }
  .entry { position: relative; display: flex; }
  .entry > button { padding: 0 12px; height: 18px; color: #b4b8be; }
  .entry.active { background: #454d60; }
  .entry.active > button { color: #f2f2f2; }
  .menu { position: absolute; z-index: 5; left: 0; top: 19px; width: 220px; padding: 2px 3px; box-sizing: border-box; background: #f0f0f0; border: 1px solid #9a9a9a; color: #1c1c1c; }
  .menu button { width: 100%; height: 20px; padding: 1px 6px 0 2px; }
  .menu .hot { background: #0078d7; color: #fff; }
  .menu hr { height: 1px; margin: 3px 0 5px; border: 0; background: #b4b4b4; }
  .gutter { width: 22px; }
  .name { flex: 1; text-align: left; }
  .sub { border: 4px solid transparent; border-left: 5px solid #111; border-right: 0; }
  u { text-underline-offset: 2px; }

  .tabs { display: flex; align-items: center; flex: none; height: 23px; padding: 4px 0 0 5px; box-sizing: border-box; }
  .tabs button { height: 19px; padding: 0 10px; color: #b4b8be; }
  .tabs .active { padding: 0 12px; background: #3b4453; color: #d8dbe0; }
  .tabs .collapse { width: 15px; height: 8px; padding: 0; margin: 2px 5px 0 21px; justify-content: center; background: #e8e8e8; }
  .up { border: 3px solid transparent; border-top: 0; border-bottom: 3px solid #444; }

  .ribbon { display: flex; flex: none; height: 120px; margin-left: 2px; box-sizing: border-box; background: #3b4453; border-top: 1px solid #2c333e; font-size: 12px; }
  .panel { flex: none; padding-top: 4px; box-sizing: border-box; border-right: 1px solid #2a313c; }
  .tool { gap: 5px; }
  .pipes { display: flex; justify-content: space-between; width: 379px; padding: 5px 8px 0 7px; }
  .grid { display: grid; grid-template-columns: 70px 160px; grid-template-rows: 32px 32px 20px; row-gap: 4px; }
  .pipes .grid .lg + span { margin-left: -2px; }
  .ends { display: flex; flex-direction: column; justify-content: flex-end; align-items: flex-end; gap: 8px; padding-bottom: 23px; }
  .row { display: flex; align-items: center; height: 24px; }
  .fittings { width: 235px; padding-left: 6px; }
  .fittings .row { display: grid; grid-template-columns: 98px 96px 34px; }
  .fittings .row.last { grid-template-columns: 84px 35px 35px 35px 35px; height: 26px; }
  .pair { width: 79px; padding-left: 7px; }
  .pair .row { display: grid; grid-template-columns: 37px 36px; }
  .tools { display: flex; flex: 1 0 auto; padding-left: 7px; border-right: 0; }
  .set { width: 108px; }
  .set .row { gap: 8px; }
  .narrow { width: 36px; }
  .mid { padding-left: 5px; }
  .start { padding-top: 1px; width: 94px; overflow: hidden; }
  .start .lg + span { margin-left: -2px; }
  .start .wide .stack { margin-left: 1px; }
  .minis { display: flex; gap: 7px; padding: 6px 0 6px 2px; }
  .stack { display: flex; flex-direction: column; align-items: center; }
  .stack .caret { margin-bottom: -4px; }
  .more { display: block; margin: 9px 0 0 6px; }

  .files { display: flex; align-items: center; flex: none; height: 30px; padding: 1px 0 0 17px; box-sizing: border-box; }
  .burger { flex-direction: column; gap: 4px; width: 16px; margin-right: 11px; }
  .burger i { width: 16px; height: 2px; background: #d0d3d8; }
  .slash { width: 8px; height: 16px; margin-right: 7px; }
  .plain { width: 33px; color: #d0d3d8; }
  .current { height: 27px; padding: 0 24px 0 16px; font-weight: 700; color: #f0f0f0; background: #3b4453; clip-path: polygon(10px 0, 100% 0, 100% 100%, 0 100%); }

  .bar { display: flex; align-items: center; flex: none; height: 28px; padding-left: 4px; box-sizing: border-box; background: #3b4453; border-bottom: 2px solid #2b323d; }
  .grip { flex: none; width: 4px; height: 17px; box-sizing: border-box; border: 1px solid #687181; border-width: 0 1px; }
  .bar > .grip + button { margin: 0 4px; }
  .combo { position: relative; display: flex; align-items: center; flex: none; height: 21px; box-sizing: border-box; padding: 0 4px; background: #fff; color: #222; }
  .combo select { appearance: none; flex: 1; min-width: 0; height: 21px; }
  .chev { width: 10px; height: 6px; flex: none; }
  .swatch { flex: none; width: 13px; height: 13px; background: #f00; border: 1px solid #c33; box-sizing: border-box; margin-right: 4px; }
  .layer { width: 323px; gap: 3px; }
  .layer .swatch { margin-left: 1px; margin-right: 3px; }
  .duo { display: flex; gap: 6px; margin: 0 8px 0 4px; }
  .duo + .grip { margin-right: 2px; }
  .colour { width: 151px; }
  .bar > .rule { margin: 0 2px; }
  .rule { flex: none; width: 2px; height: 22px; background: #2c333e; border-right: 1px solid #566070; box-sizing: border-box; }
  .ltype { width: 160px; }
  .weight { width: 125px; }
  .stroke { flex: none; width: 60px; height: 1px; margin-right: 6px; background: #222; }
  .stroke.short { width: 35px; }
  .plot { flex: 1; padding-left: 10px; }
  .plot select { color: #777; opacity: 1; }
  .strip { display: flex; align-items: center; gap: 7px; }
  .sizes { width: 357px; margin-right: 7px; }
  .sizes .grip { margin-right: -2px; }
  .second { height: 30px; padding-bottom: 2px; }
  .second > .grip { margin: 0 5px 0 6px; }
  .size { width: 16px; height: 16px; justify-content: center; background: #1d64b4; color: #fff; font: 700 14px/16px "Liberation Serif", serif; }
  .query { background: #164b85; }

  main { display: flex; flex: 1; min-height: 0; background: #212830; }
  aside { position: relative; display: flex; flex-direction: column; justify-content: space-between; align-items: center; flex: none; width: 19px; margin: 2px 0 0 5px; background: #3b4453; overflow: hidden; }
  .dots { width: 10px; height: 5px; margin-top: 2px; background: repeating-linear-gradient(90deg, #aab 0 1px, transparent 1px 3px); }
  aside span { writing-mode: vertical-rl; transform: rotate(180deg); margin-bottom: -12px; }
  .canvas { flex: 1; padding-left: 5px; }
  .edge { width: 280px; height: 2px; margin-left: 33px; background: #7d828a; }
  p { margin: 2px 0 0; color: #e0e2e5; }
  .cross { display: block; width: 1px; height: 110px; margin-left: 161px; background: #ddd; }

  .arrows { position: absolute; z-index: 6; left: 0; top: -1px; }
  .note { position: absolute; z-index: 7; box-sizing: border-box; height: 52px; border: 2px solid #f00; background: #fff; color: #f00; font: 35px/44px "Liberation Sans", Arial, sans-serif; padding-left: 7px; }
  .one { left: 436px; top: 18px; width: 201px; }
  .two { left: 466px; top: 177px; width: 388px; }
</style>
